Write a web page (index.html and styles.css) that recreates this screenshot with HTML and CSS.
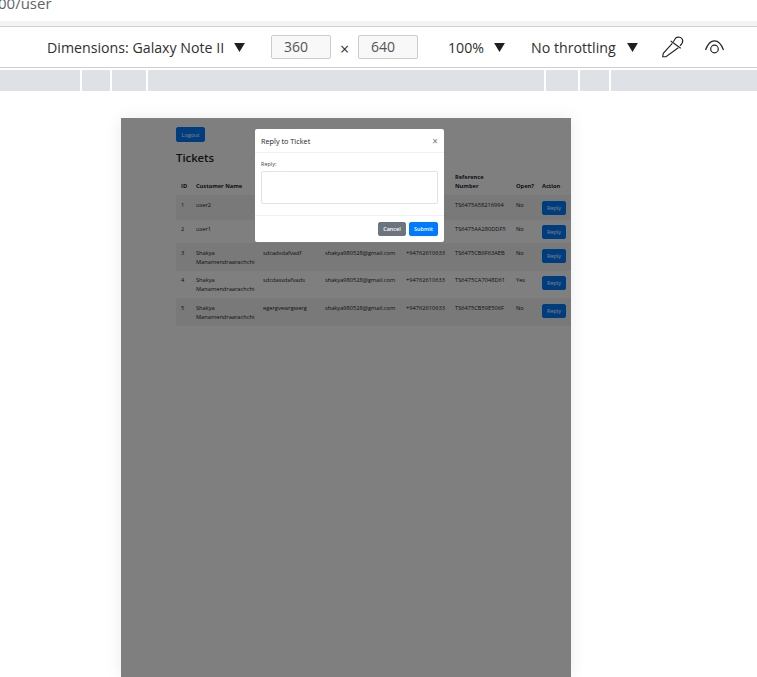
FILE: index.html
```html
<!DOCTYPE html>
<html lang="en">
<head>
<meta charset="UTF-8">
<meta name="viewport" content="width=device-width, initial-scale=1.0">
<title>Tickets</title>
<link rel="stylesheet" href="styles.css">
</head>
<body>
<div class="urlbar"><span class="url">00/user</span></div>
<div class="toolbar">
    <span class="tool-label dim-label">Dimensions: Galaxy Note II</span>
    <svg class="caret caret-dim" viewBox="0 0 12 10"><path d="M0 0H12L6 10Z"/></svg>
    <span class="size-box size-w">360</span>
    <span class="times">×</span>
    <span class="size-box size-h">640</span>
    <span class="tool-label zoom-label">100%</span>
    <svg class="caret caret-zoom" viewBox="0 0 12 10"><path d="M0 0H12L6 10Z"/></svg>
    <span class="tool-label throttle-label">No throttling</span>
    <svg class="caret caret-throttle" viewBox="0 0 12 10"><path d="M0 0H12L6 10Z"/></svg>
    <svg class="icon-dropper" viewBox="0 0 22 22" fill="none" stroke="#222" stroke-width="1.1">
        <path d="M8.700 5L18.700 12.300"/>
        <path d="M10.300 7.300L1.300 17.300L0.700 20.700L4 20.700L16.300 11.800"/>
        <path d="M11.300 5.700L14 1.700C16 0.500 19.500 1 20.700 4C21 6 19.500 8.500 18 9.700"/>
    </svg>
    <svg class="icon-eye" viewBox="0 0 20 14" fill="none" stroke="#222" stroke-width="1.2">
        <path d="M0.500 10C3 3 6 0.800 9.500 0.800C13 0.800 16 3 18.500 10"/>
        <circle cx="9.500" cy="9" r="3.800"/>
    </svg>
</div>
<div class="mediabar">
    <span class="seg seg-1"></span>
    <span class="seg seg-2"></span>
    <span class="seg seg-3"></span>
    <span class="seg seg-4"></span>
    <span class="seg seg-5"></span>
    <span class="seg seg-6"></span>
    <span class="seg seg-7"></span>
</div>

<div class="viewport">
    <div class="device">
        <div class="container">
            <button class="btn btn-primary logout">Logout</button>
            <h2>Tickets</h2>
            <table>
                <thead>
                    <tr>
                        <th class="col-id">ID</th>
                        <th class="col-name">Customer Name</th>
                        <th class="col-subject"></th>
                        <th class="col-email"></th>
                        <th class="col-phone"></th>
                        <th class="col-ref">Reference Number</th>
                        <th class="col-open">Open?</th>
                        <th class="col-action">Action</th>
                    </tr>
                </thead>
                <tbody>
                    <tr class="row-1">
                        <td>1</td><td>user2</td><td></td><td></td><td></td>
                        <td>TS6475A58216994</td><td>No</td>
                        <td><button class="btn btn-primary reply">Reply</button></td>
                    </tr>
                    <tr class="row-2">
                        <td>2</td><td>user1</td><td></td><td></td><td></td>
                        <td>TS6475AA280DDF5</td><td>No</td>
                        <td><button class="btn btn-primary reply">Reply</button></td>
                    </tr>
                    <tr class="row-3">
                        <td>3</td><td>Shakya Manamendraarachchi</td><td>sdcadvdafvadf</td>
                        <td>shakya980528@gmail.com</td><td>+94762610633</td>
                        <td>TS6475CB6F63AEB</td><td>No</td>
                        <td><button class="btn btn-primary reply">Reply</button></td>
                    </tr>
                    <tr class="row-4">
                        <td>4</td><td>Shakya Manamendraarachchi</td><td>sdcdasvdafvads</td>
                        <td>shakya980528@gmail.com</td><td>+94762610633</td>
                        <td>TS6475CA7048D61</td><td>Yes</td>
                        <td><button class="btn btn-primary reply">Reply</button></td>
                    </tr>
                    <tr class="row-5">
                        <td>5</td><td>Shakya Manamendraarachchi</td><td>egergvewrgwerg</td>
                        <td>shakya980528@gmail.com</td><td>+94762610633</td>
                        <td>TS6475CB59E506F</td><td>No</td>
                        <td><button class="btn btn-primary reply">Reply</button></td>
                    </tr>
                </tbody>
            </table>
        </div>
        <div class="backdrop"></div>
        <div class="modal">
            <div class="modal-header">
                <span class="modal-title">Reply to Ticket</span>
                <span class="close">×</span>
            </div>
            <div class="modal-body">
                <label for="reply">Reply:</label>
                <textarea id="reply"></textarea>
            </div>
            <div class="modal-footer">
                <button class="btn btn-secondary">Cancel</button>
                <button class="btn btn-primary">Submit</button>
            </div>
        </div>
    </div>
</div>
</body>
</html>
```

FILE: styles.css
```css
html, body {
    margin: 0;
    padding: 0;
    height: 677px;
    overflow: hidden;
    background-color: #fff;
    font-family: "Open Sans", "Noto Sans", Arial, sans-serif;
    color: #212529;
}

.urlbar {
    height: 21px;
    overflow: hidden;
    background-color: #fff;
    border-bottom: 5px solid #f3f3f3;
}

.url {
    display: block;
    margin-left: -2px;
    margin-top: -7px;
    font-size: 15px;
    line-height: 20px;
    color: #5f6368;
}

.toolbar {
    height: 40px;
    display: flex;
    align-items: center;
    padding-left: 47px;
    border-top: 1px solid #cfcfcf;
    border-bottom: 1px solid #cfcfcf;
}

.tool-label {
    font-size: 14.200px;
    color: #303030;
    white-space: nowrap;
    flex: none;
}

.dim-label { width: 177px; }

.caret {
    width: 11px;
    height: 9px;
    fill: #202020;
    flex: none;
}

.caret-dim { margin-left: 10px; }
.caret-zoom { margin-left: 9px; }
.caret-throttle { margin-left: 10px; }

.size-box {
    width: 60px;
    height: 24px;
    box-sizing: border-box;
    padding-left: 12px;
    border: 1px solid #ccc;
    border-radius: 2px;
    background-color: #f8f8f8;
    font-size: 14px;
    line-height: 22px;
    color: #555;
}

.size-w { margin-left: 26px; }

.times {
    width: 27px;
    text-align: center;
    font-size: 16px;
    color: #333;
    padding-top: 4px;
}

.zoom-label {
    margin-left: 30px;
    width: 37px;
}

.throttle-label {
    margin-left: 26px;
    width: 86px;
}

.icon-dropper {
    width: 22px;
    height: 22px;
    margin-left: 24px;
    flex: none;
}

.icon-eye {
    width: 20px;
    height: 14px;
    margin-left: 21px;
    flex: none;
}

.mediabar {
    display: flex;
    gap: 2px;
    height: 21px;
    margin-top: 2px;
}

.seg {
    display: block;
    height: 100%;
    background-color: #dee1e6;
}

.seg-1 { width: 80px; }
.seg-2 { width: 28px; }
.seg-3 { width: 34px; }
.seg-4 { width: 396px; }
.seg-5 { width: 32px; }
.seg-6 { width: 29px; }
.seg-7 { flex: 1; }

.viewport {
    padding: 27px 0 0 121px;
}

.device {
    position: relative;
    width: 450px;
    height: 559px;
    background-color: #fff;
    box-shadow: 0 0 16px rgba(0, 0, 0, 0.08);
    overflow: hidden;
}

.container {
    padding: 9px 0 0 55px;
}

.btn {
    display: inline-block;
    border: 1px solid transparent;
    border-radius: 2px;
    font-family: inherit;
    font-size: 5.500px;
    padding: 0;
    color: #fff;
    text-align: center;
}

.btn-primary {
    background-color: #007bff;
    border-color: #007bff;
}

.btn-secondary {
    background-color: #6c757d;
    border-color: #6c757d;
}

.logout {
    display: block;
    width: 29px;
    height: 15px;
}

h2 {
    margin: 8px 0 7px;
    font-size: 11.300px;
    line-height: 15px;
    font-weight: 600;
}

table {
    width: 395px;
    table-layout: fixed;
    border-collapse: collapse;
    font-size: 5.700px;
    line-height: 9px;
}

th {
    height: 23px;
    padding: 0 5px 4px;
    text-align: left;
    vertical-align: bottom;
    font-weight: 700;
    color: #212529;
}

td {
    padding: 5px 5px 4px;
    vertical-align: top;
}

th, td {
    box-sizing: border-box;
}

tbody tr:nth-child(odd) {
    background-color: rgba(0, 0, 0, 0.05);
}

tbody tr {
    height: 27px;
}

tbody tr.row-1 { height: 25px; }
tbody tr.row-2 { height: 23px; }
tbody tr.row-3 { height: 28px; }

.row-1 td { padding-top: 6px; }
.row-2 td { padding-top: 4.500px; }
.row-3 td { padding-top: 5.500px; }
.row-4 td { padding-top: 4.500px; }
.row-5 td { padding-top: 5.500px; }

.col-id { width: 15px; }
.col-name { width: 67px; }
.col-subject { width: 62px; }
.col-email { width: 81px; }
.col-phone { width: 49px; }
.col-ref { width: 61px; }
.col-open { width: 26px; }
.col-action { width: 34px; }

.reply {
    width: 24px;
    height: 14px;
    display: block;
}

.backdrop {
    position: absolute;
    top: 0;
    left: 0;
    right: 0;
    bottom: 0;
    background-color: rgba(0, 0, 0, 0.5);
}

.modal {
    position: absolute;
    top: 11px;
    left: 134px;
    width: 189px;
    height: 113px;
    background-color: #fff;
    border-radius: 2px;
    display: flex;
    flex-direction: column;
}

.modal-header {
    height: 23px;
    padding: 0 6px;
    display: flex;
    align-items: center;
    justify-content: space-between;
    border-bottom: 1px solid #f1f1f1;
}

.modal-title {
    font-size: 7.300px;
    font-weight: 500;
    color: #212529;
}

.close {
    font-size: 10px;
    line-height: 10px;
    color: #777;
}

.modal-body {
    flex: 1;
    padding: 7px 6px 0;
}

.modal-body label {
    display: block;
    font-size: 5.500px;
    line-height: 8px;
    color: #444;
    margin-bottom: 3px;
}

textarea {
    display: block;
    width: 100%;
    height: 33px;
    box-sizing: border-box;
    border: 1px solid #e3e3e3;
    border-radius: 2px;
    resize: none;
}

.modal-footer {
    height: 27px;
    padding: 6px 6px 0 0;
    box-sizing: border-box;
    display: flex;
    justify-content: flex-end;
    align-items: flex-start;
    gap: 3px;
    border-top: 1px solid #f1f1f1;
}

.modal-footer .btn {
    height: 14px;
    width: 28px;
    font-weight: 600;
}

.modal-footer .btn-primary {
    width: 29px;
}
```
